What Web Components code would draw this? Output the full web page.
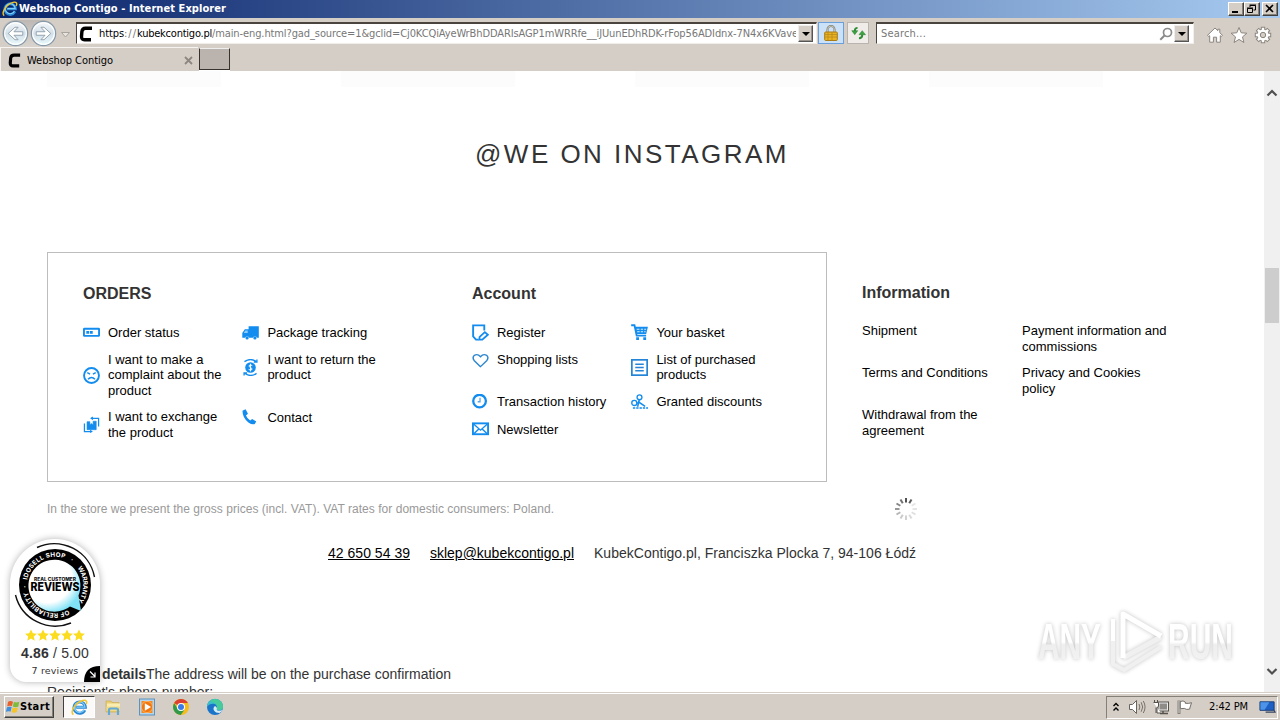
<!DOCTYPE html>
<html lang="en">
<head>
<meta charset="utf-8">
<title>Webshop Contigo</title>
<style>
html,body{margin:0;height:100%;overflow:hidden}
body{width:1280px;height:720px;display:flex;flex-direction:column;font:11px/14px "DejaVu Sans Condensed","DejaVu Sans",sans-serif;color:#000;background:#d5cec6;position:relative}
</style>
</head>
<body>
<title-bar></title-bar>
<nav-bar></nav-bar>
<tab-strip></tab-strip>
<page-view></page-view>
<task-bar></task-bar>
<script>
const B = '#128cee';
const ICONS = {
  ie: `<svg viewBox="0 0 18 18"><path d="M14.6 11.8A6 6 0 1 1 15.2 8.800H5.500" fill="none" stroke="#2a86d4" stroke-width="3.200"/><path d="M14 11.600A5.600 5.600 0 1 1 14.800 8.500H6" fill="none" stroke="#7fd0fa" stroke-width="1.300"/><path d="M2.500 16.500C-1.500 14 4.500 3.500 12.500 1.500C16.500.6 17.300 3 16 5.500" fill="none" stroke="#f2c52c" stroke-width="1.600"/></svg>`,
  c: `<svg viewBox="0 0 14 16"><path d="M13 2.300H6.500Q3.300 2.300 2.900 5.500L2.500 10.500Q2.300 13.700 5.500 13.700H12" fill="none" stroke="#000" stroke-width="3.400"/></svg>`,
  back: `<svg viewBox="0 0 26 26"><defs><linearGradient id="g" x2="0" y2="1"><stop offset="0" stop-color="#f6f9fb"/><stop offset=".5" stop-color="#d3dfe8"/><stop offset="1" stop-color="#e9fafd"/></linearGradient></defs><circle cx="13" cy="13" r="11.700" fill="url(#g)" stroke="#8799a8" stroke-width="1.200"/><circle cx="13" cy="13" r="10.400" fill="none" stroke="#fff"/><path d="M6 13l6.500-6h3l-4 4.300H20v3.400h-8.500l4 4.300h-3z" fill="#fff" stroke="#8d9fae" stroke-width=".9"/></svg>`,
  lock: `<svg viewBox="0 0 14 16"><path d="M3.500 8V4.500a3.500 3.500 0 0 1 7 0V8" fill="none" stroke="#7c7a70" stroke-width="2"/><path d="M3.500 7V4.500a3.500 3.500 0 0 1 7 0V7" fill="none" stroke="#e4e0c8" stroke-width=".7"/><rect x=".7" y="7" width="12.600" height="8.500" rx="1" fill="#e9b322" stroke="#a87b13"/><path d="M1 9.500h12M1 12h12M4 7v8.500M8 7v8.500" stroke="#b98a1c" stroke-width=".8"/></svg>`,
  refresh: `<svg viewBox="0 0 16 14"><path d="M7 1.500Q4 1.500 4 5" fill="none" stroke="#2f8f35" stroke-width="2"/><path d="M.8 4.500h6.400L4 8.800z" fill="#3aa43f" stroke="#23762a" stroke-width=".5"/><path d="M8.500 12.500q3.500 0 3.500-4" fill="none" stroke="#2f8f35" stroke-width="2.200"/><path d="M8.500 8.800h7L12 4.500z" fill="#3aa43f" stroke="#23762a" stroke-width=".5"/></svg>`,
  search: `<svg viewBox="0 0 14 14"><circle cx="8.500" cy="5.500" r="4" fill="#fff" stroke="#8b8b8b" stroke-width="1.700"/><path d="M5.500 8.500L1.300 12.700" stroke="#8b8b8b" stroke-width="2"/></svg>`,
  home: `<svg viewBox="0 0 18 18"><path d="M1.500 9.300L9 2l2.800 2.700V3.200h2V6.700l2.700 2.600-1.300 1.200-.9-.8v6.500h-3.700v-5H7.400v5H3.700V9.700l-.9.8z" fill="#fff" stroke="#8b857e" stroke-width="1"/></svg>`,
  star: `<svg viewBox="0 0 18 18"><path d="M9 1.500l2.200 5.300 5.700.4-4.400 3.700 1.400 5.600L9 13.400l-4.900 3.100 1.400-5.600L1.100 7.200l5.700-.4z" fill="#fff" stroke="#8b857e"/></svg>`,
  gear: `<svg viewBox="0 0 18 18"><g stroke="#8b857e" stroke-width="4.400"><path d="M9 .8v16.400M.8 9h16.400M3.200 3.200l11.600 11.600M14.800 3.200L3.200 14.800"/></g><circle cx="9" cy="9" r="6.300" fill="#8b857e"/><g stroke="#fff" stroke-width="2.400"><path d="M9 1.800v14.400M1.800 9h14.400M3.900 3.900l10.200 10.200M14.100 3.900L3.900 14.100"/></g><circle cx="9" cy="9" r="5.500" fill="#fff"/><circle cx="9" cy="9" r="2.700" fill="#d5cec6" stroke="#8b857e"/></svg>`,
  status: `<svg viewBox="0 0 18 18"><rect x="1" y="5" width="16" height="7.600" rx=".5" fill="none" stroke="${B}" stroke-width="2"/><path d="M3.500 7.300h3v3h-3zM7.300 7.300h3v3h-3z" fill="${B}"/></svg>`,
  truck: `<svg viewBox="0 0 18 18"><path d="M7 2.500h10.800v12h-1.900a2.300 2.300 0 0 0-4.400 0H7.600a2.300 2.300 0 0 0-4.400 0H.3V9.500L3 5.500h4z" fill="${B}"/><path d="M3.500 6.800H6v2.700H1.900z" fill="#8ccbfa"/><circle cx="5.400" cy="14.800" r="1.700" fill="${B}"/><circle cx="13.700" cy="14.800" r="1.700" fill="${B}"/></svg>`,
  sad: `<svg viewBox="0 0 18 18"><circle cx="9" cy="9" r="7.900" fill="none" stroke="${B}" stroke-width="2"/><path d="M4.500 6l3 1.500M13.500 6l-3 1.500M5.300 13q3.700-3.800 7.400 0" fill="none" stroke="${B}" stroke-width="1.600"/></svg>`,
  ret: `<svg viewBox="0 0 18 18"><circle cx="9" cy="9" r="5.600" fill="${B}"/><path d="M10.900 7Q9 5.700 7.600 6.800 7 8.300 9 9T10.500 11.200Q9 12.500 7 11M9 5v8.200" stroke="#fff" stroke-width="1" fill="none"/><path d="M2.600 2.800Q9-1.500 14.800 2.600M15.800.5v2.800H12.500M15.400 15.200Q9 19.500 3.200 15.400M2.200 17.500v-2.800H5.500" fill="none" stroke="${B}" stroke-width="1.400"/></svg>`,
  exch: `<svg viewBox="0 0 18 18"><path d="M4.300 6h3v3.200L9 8l1.700 1.200V5.500H14v9H4.300z" fill="${B}" stroke="${B}" stroke-width=".6"/><path d="M8.500 2.500h8V11M1.500 8v8.500H9" fill="none" stroke="${B}" stroke-width="1.300"/><path d="M10.500.5v4L7.500 2.500zM7.500 14.500v3.500l3-1.700z" fill="${B}"/></svg>`,
  phone: `<svg viewBox="0 0 18 18"><path d="M.5 1.800L3.800.2l2.500 4.900-2.100 1.800q1.300 3.500 4.500 5.200l2-1.600 4.400 2.700-1.600 2.700q-2.600 1.200-6.700-1.600Q.5 9.100.5 1.800z" fill="${B}"/></svg>`,
  register: `<svg viewBox="0 0 18 18"><path d="M13 7V1.500H1.200v11.700l3 3.300H7" fill="none" stroke="${B}" stroke-width="2"/><path d="M7.700 16.600l.4-3 5.500-5 3.200 2.800-5.900 5.200z" fill="#fff" stroke="${B}" stroke-width="1.900"/></svg>`,
  heart: `<svg viewBox="0 0 18 18"><path d="M9 15.500L2.500 9.300Q-.2 6 2.500 3.500 6 1.500 9 5q3-3.500 6.500-1.500 2.700 2.500 0 5.800z" fill="none" stroke="#2c86cf" stroke-width="1.500"/></svg>`,
  clock: `<svg viewBox="0 0 18 18"><circle cx="8" cy="7.500" r="6.700" fill="#fff" stroke="${B}" stroke-width="2.400"/><path d="M8.500 4v4.200H6" fill="none" stroke="#5aa7e6" stroke-width="1.400"/></svg>`,
  mail: `<svg viewBox="0 0 18 18"><rect x="1" y="2.500" width="16" height="11.500" fill="none" stroke="${B}" stroke-width="2"/><path d="M2 3.500l7 6.200 7-6.200M2 13.500L7.200 8.500M16 13.500L10.800 8.500" fill="none" stroke="${B}" stroke-width="1.500"/></svg>`,
  cart: `<svg viewBox="0 0 18 18"><path d="M.2 1.300H3.700l2.300 11H16" fill="none" stroke="${B}" stroke-width="1.900"/><path d="M4 3h13.900l-1.800 7.500H6z" fill="${B}"/><path d="M6 5.500h3M10.300 5.500h2.500M14 5.500h2M6.500 8.200h2.700M10.300 8.200h2.500M14 8.200h1.500" stroke="#d8efff" stroke-width="1.200"/><path d="M5.500 14h3v3h-3zM13 14h3v3h-3z" fill="${B}"/></svg>`,
  list: `<svg viewBox="0 0 18 18"><rect x=".9" y=".9" width="16.200" height="16.200" fill="none" stroke="#2485d8" stroke-width="1.800"/><path d="M4.500 5.500h9M4.500 9h9M4.500 12.500h9" stroke="#2485d8" stroke-width="1.600"/></svg>`,
  scis: `<svg viewBox="0 0 18 18"><circle cx="9" cy="3.500" r="2.600" fill="none" stroke="${B}" stroke-width="1.400"/><circle cx="3.500" cy="9.500" r="2.700" fill="none" stroke="${B}" stroke-width="1.400"/><path d="M8.700 6.200L7 13.500M6 9.500l3-.5 6 4" fill="none" stroke="${B}" stroke-width="1.600"/><path d="M2 14.800h16" stroke="${B}" stroke-width="1.400" stroke-dasharray="2.500 1"/></svg>`,
  win: `<svg viewBox="0 0 18 18"><path d="M3.500 3Q6 1.500 9 3L7.800 8Q5 7 2.500 8.200z" fill="#e8602c"/><path d="M10 3.500q3 1.200 6-.3L15 8.500q-3 1.300-6.200 0z" fill="#7dbb3c"/><path d="M2.200 9.300q2.500-1.200 5.300-.2l-1.200 5q-2.500-1-5.300.2z" fill="#3f8fdc"/><path d="M8.500 9.500q3 1.200 6 0l-1.300 5.200q-3 1.300-6 0z" fill="#f5c32c"/></svg>`,
  folder: `<svg viewBox="0 0 18 18"><path d="M2 3h5l1 1.500h7V14H2z" fill="#e9cd72" stroke="#c8a84a" stroke-width=".6"/><path d="M3 5.500h13V9H3z" fill="#f8ecb0"/><path d="M2.500 8.500h13.500v4.500H2.500z" fill="#f0da8a"/><path d="M5 17v-5q0-1.500 1.500-1.500h6q1.500 0 1.500 1.500v5" fill="none" stroke="#62a9d6" stroke-width="2.200"/></svg>`,
  media: `<svg viewBox="0 0 18 18"><rect x="1.500" y="1" width="15" height="16" fill="#b4d5ee" stroke="#5b93be"/><rect x="3.500" y="3" width="11" height="12" fill="#f58a1c"/><circle cx="9" cy="9" r="5.600" fill="#f2770f" stroke="#ffc98c" stroke-width=".6"/><path d="M6.800 5.200L13 9l-6.200 3.800z" fill="#fff"/></svg>`,
  chrome: `<svg viewBox="0 0 18 18"><circle cx="9" cy="9" r="8" fill="#f4bd1b"/><path d="M9 9L2.100 5A8 8 0 0 1 15.900 5H9z" fill="#dc4030"/><path d="M9 9l3 3.500L8.700 17A8 8 0 0 1 2.100 5L6 11.500z" fill="#31994b"/><circle cx="9" cy="9" r="4" fill="#fff"/><circle cx="9" cy="9" r="3" fill="#3a7be8"/></svg>`,
  edge: `<svg viewBox="0 0 18 18"><circle cx="9" cy="9" r="8" fill="#1a74ca"/><path d="M1 9A8 8 0 0 1 17 8.500q.2 4-4.500 4Q9.800 12.300 11 10.500 11.300 6 7 5.800 3 5.800 1 9z" fill="#3cc0c8"/><path d="M9 1a8 8 0 0 1 8 7.500q0 3.500-4.500 3.500-2-.2-1.500-1.500Q12 4.500 4 3 6 1 9 1z" fill="#4bcf8a" opacity=".75"/><path d="M11 10.500q-1 1.900 1.500 2.200 2.500.2 4-1-1 2.300-3 3.300-4 0-5.500-2.500T9 8q1.800.5 2 2.500z" fill="#d7ecf5"/></svg>`,
  speaker: `<svg viewBox="0 0 18 16"><path d="M1.500 5.500h3l4-4v13l-4-4h-3z" fill="#fff" stroke="#69635d"/><path d="M11 5q1.700 3 0 6M13.200 3.300q3 4.700 0 9.400M15.300 2q3.500 6 0 12" fill="none" stroke="#78726c" stroke-width="1"/></svg>`,
  net: `<svg viewBox="0 0 18 16"><rect x="6" y="3" width="10.500" height="9" fill="#eee" stroke="#57524c"/><rect x="7.500" y="4.500" width="7.500" height="6" fill="#8f8b87"/><path d="M8 14.500h8M11 12v2" stroke="#57524c" stroke-width="1.500"/><path d="M1.500 3.500h5v4l-1.500 1v5.500H9M2.500 1v3M5.500 1v3M4 8.500v5.500" stroke="#57524c" fill="#fff"/></svg>`,
  flag: `<svg viewBox="0 0 18 16"><path d="M3 1.500v13.500" stroke="#57524c" stroke-width="2.600"/><path d="M3 1.500v13" stroke="#fff" stroke-width="1"/><path d="M4.300 2.500q3-1.300 5 .5v1.300q3.500.5 6.200-.6l-2 6.500q-3 .8-5.200-.8l-4 .3z" fill="#fff" stroke="#69635d" stroke-width=".9"/></svg>`,
  desk: `<svg viewBox="0 0 18 16"><path d="M1 2.500h15v9H1z" fill="#1d5fc2" stroke="#163c7a"/><path d="M1.500 3H11L6 11H1.500z" fill="#4d93e8"/><path d="M7 13.500h10l-1-2" fill="none" stroke="#36465e" stroke-width="1.300"/></svg>`
};
const define = (name, css, html, hook) => customElements.define(name, class extends HTMLElement {
  constructor(){ super(); this.attachShadow({mode:'open'}); }
  connectedCallback(){
    this.shadowRoot.innerHTML = `<style>*,:host{box-sizing:border-box}${css}</style>${typeof html === 'function' ? html(this) : html}`;
    if (hook) hook(this);
  }
});

/* Square icon; attribute s is its width, h its height */
define('ui-icon', ':host{display:block;flex:none}svg{display:block;width:100%;height:100%}',
  el => ICONS[el.getAttribute('n')],
  el => { const s = el.getAttribute('s') || 18; el.style.width = s+'px'; el.style.height = (el.getAttribute('h')||s)+'px'; });

define('title-bar', `:host{display:flex;align-items:center;height:18px;flex:none;padding:0 2px 0 2px;background:linear-gradient(90deg,#0a246a,#a6caf0);color:#fff;font-weight:bold;gap:1px}
  .b{display:flex;margin-left:auto;margin-top:0}
  i{display:block;width:16px;height:14px;background:#d5cec6;border:1px solid;border-color:#fff #404040 #404040 #fff;box-shadow:inset -1px -1px #848078}
  i:last-child{margin-left:2px}svg{display:block}`,
  `<ui-icon n="ie" s="16"></ui-icon><ui-fit w="207">Webshop Contigo - Internet Explorer</ui-fit>
  <div class="b"><i><svg width="14" height="12"><path d="M3 9h6" stroke="#000" stroke-width="2"/></svg></i><i><svg width="14" height="12"><path d="M5 4V2.500h5.500V7H8.500M4.500 2h6.500" fill="none" stroke="#000"/><path d="M2.500 5.500h5v4h-5zM2 5h6" fill="none" stroke="#000"/></svg></i><i><svg width="14" height="12"><path d="M3 2l7 7M10 2l-7 7" stroke="#000" stroke-width="1.600"/></svg></i></div>`);

define('nav-bar', `:host{display:flex;height:29px;flex:none;align-items:flex-start;padding:2px 6px 0 2px;background:#d5cec6}
  .nav{display:flex;gap:1px;width:54px;height:27px;background:linear-gradient(#bdb8b4,#d9d4ce);border-radius:13px}
  .nav ui-icon+ui-icon{transform:scaleX(-1)}
  .tri{margin:12px 6px 0 5px;flex:none}
  .f{display:flex;align-items:center;height:22px;margin-top:2px;background:#fff;border:2px solid;border-color:#4a443f #f3f0ec #f0ece8 #4a443f;border-right-width:1px;border-bottom-width:1px;border-left-width:1px;color:#777}
  .url{width:741px;padding-left:2px}.url .t{display:flex;width:697px;overflow:hidden;margin-left:6px;white-space:nowrap}
  .url b{font-weight:normal;color:#000}
  .dd{display:block;width:15px;height:17px;background:#d5cec6;border:1px solid;border-color:#eee #555 #555 #eee;box-shadow:inset -1px -1px #99948e;flex:none}
  .dd svg{display:block}
  .lk{margin:2px 0 0 1px;width:26px;height:22px;border:1px solid #6a9fdc;background:#cbe1f8;display:grid;place-items:center}
  .rf{margin:2px 0 0 3px;width:22px;height:22px;border:1px solid #b9b4ae;background:#efece9;display:grid;place-items:center}
  .s{width:318px;margin-left:7px;padding-left:4px}.s .m{margin-left:auto}
  .r{display:flex;gap:6px;margin:6px 0 0 12px}`,
  `<div class="nav"><ui-icon n="back" s="27"></ui-icon><ui-icon n="back" s="27"></ui-icon></div>
  <svg class="tri" width="9" height="6"><path d="M.5.500h8L4.500 5z" fill="#e8e4df" stroke="#aaa49d"/></svg>
  <div class="f url"><ui-icon n="c" s="14" h="16"></ui-icon><div class="t"><b><ui-fit w="25">https</ui-fit></b><ui-fit w="13">://</ui-fit><b><ui-fit w="75">kubekcontigo.pl</ui-fit></b><ui-fit w="586">/main-eng.html?gad_source=1&amp;gclid=Cj0KCQiAyeWrBhDDARIsAGP1mWRRfe__iJUunEDhRDK-rFop56ADIdnx-7N4x6KVave</ui-fit></div><span style="width:2px"></span><span class="dd"><svg width="13" height="15"><path d="M3 6h8L7 10z"/></svg></span></div>
  <div class="lk"><ui-icon n="lock" s="14" h="16"></ui-icon></div><div class="rf"><ui-icon n="refresh" s="15" h="14"></ui-icon></div>
  <div class="f s"><ui-fit w="45">Search...</ui-fit><ui-icon class="m" n="search" s="14"></ui-icon><span class="dd" style="margin:0 4px 0 1px"><svg width="13" height="15"><path d="M3 6h8L7 10z"/></svg></span></div>
  <div class="r"><ui-icon n="home"></ui-icon><ui-icon n="star"></ui-icon><ui-icon n="gear"></ui-icon></div>`);

define('tab-strip', `:host{display:flex;height:24px;flex:none;background:#d5cec6}
  .t{display:flex;align-items:center;width:198px;border-top:1px solid #f6f3f0;border-left:1px solid #f6f3f0;padding:2px 5px 0 6px;gap:5px}
  .t svg{margin-left:auto}
  .n{width:31px;height:22px;margin:1px 0 0 1px;background:#bbb4ae;border:1px solid #38322f;border-left-width:1px;border-top-color:#eee;box-shadow:0 1px #fff}`,
  `<div class="t"><ui-icon n="c" s="15" h="15"></ui-icon><ui-fit w="86">Webshop Contigo</ui-fit><svg width="9" height="9"><path d="M1 1l7 7M8 1L1 8" stroke="#8d8680" stroke-width="1.800"/></svg></div><div class="n"></div>`);

define('link-item', `:host{display:flex;align-items:center;gap:8px}span{display:block}`,
  el => (el.hasAttribute('icon') ? `<ui-icon n="${el.getAttribute('icon')}" s="17"></ui-icon>` : '') + `<span><slot></slot></span>`);

define('link-group', `:host{display:block}h2{margin:0;font-size:16px;line-height:20px;color:#333}
  div{display:grid;grid-template-columns:var(--c,159.4px) 170px;row-gap:var(--g,10.7px);align-items:start;margin-top:20px;font-size:13px;line-height:15.6px}`,
  el => `<h2>${el.getAttribute('heading')}</h2><div><slot></slot></div>`);

define('scroll-bar', `:host{display:flex;flex-direction:column;width:16px;background:#f0f0f0;padding:18px 1px 15px;align-items:center}
  .th{width:14px;height:55px;background:#cdcdcd;margin-top:171px}.d{margin-top:auto}svg{display:block}`,
  `<svg width="12" height="8"><path d="M1.500 6.500L6 2l4.500 4.500" fill="none" stroke="#505050" stroke-width="2.200"/></svg><div class="th"></div><svg class="d" width="12" height="12"><path d="M1.500 4L6 8.500 10.500 4" fill="none" stroke="#505050" stroke-width="2.200"/></svg>`);

define('page-view', `:host{display:flex;height:621px;flex:none;background:#fff;overflow:hidden;font-family:"Liberation Sans",Arial,sans-serif}
  main{width:1264px;padding-left:47px;position:relative}
  .ph{display:grid;grid-template-columns:repeat(4,174px);column-gap:120px;height:16px}.ph i{background:#fcfcfc}
  h1{margin:49px 0 0;padding-left:428px;font-weight:normal;font-size:26px;line-height:36px;color:#333;display:flex}
  .cols{display:flex;margin-top:80px;gap:35px}
  .box{width:780px;height:230px;border:1px solid #bdbdbd;padding:31px 0 0 35px;display:flex;gap:59.600px}
  .info{padding-top:31px;--c:160px;--g:11px}
  .vat{display:flex;justify-content:space-between;width:871px;color:#999;font-size:12px;line-height:16px;margin-top:15px;height:24px;align-items:center}
  .ct{display:flex;gap:20px;margin:23px 0 0 281px;font-size:14px;line-height:18px;color:#333}
  .u{color:#000;text-decoration:underline;text-underline-offset:1px}
  .ad{margin-top:103px;font-size:14px;line-height:18px;color:#333}.ad p{margin:0}.ad p:first-child{padding-left:55px}
  review-badge{position:absolute;left:10px;top:468px}any-mark{position:absolute;left:1029px;top:534px}`,
  () => `<main><div class="ph"><i></i><i></i><i></i><i></i></div>
  <h1><ui-fit w="314">@WE ON INSTAGRAM</ui-fit></h1>
  <div class="cols"><div class="box">
  <link-group heading="ORDERS"><link-item icon="status">Order status</link-item><link-item icon="truck">Package tracking</link-item><link-item icon="sad">I want to make a<br>complaint about the<br>product</link-item><link-item icon="ret">I want to return the<br>product</link-item><link-item icon="exch">I want to exchange<br>the product</link-item><link-item icon="phone">Contact</link-item></link-group>
  <link-group heading="Account"><link-item icon="register">Register</link-item><link-item icon="cart">Your basket</link-item><link-item icon="heart">Shopping lists</link-item><link-item icon="list">List of purchased<br>products</link-item><link-item icon="clock">Transaction history</link-item><link-item icon="scis">Granted discounts</link-item><link-item icon="mail">Newsletter</link-item></link-group>
  </div><div class="info"><link-group heading="Information"><link-item>Shipment</link-item><link-item>Payment information and<br>commissions</link-item><link-item>Terms and Conditions</link-item><link-item>Privacy and Cookies<br>policy</link-item><link-item>Withdrawal from the<br>agreement</link-item></link-group></div></div>
  <div class="vat"><ui-fit w="507">In the store we present the gross prices (incl. VAT). VAT rates for domestic consumers: Poland.</ui-fit><svg width="24" height="24" viewBox="-12 -12 24 24">${[.85,.8,.12,.12,.15,.18,.22,.26,.36,.5,.6,.7].map((o,i)=>`<path d="M0-6.500V-11" transform="rotate(${i*30})" stroke="#333" stroke-width="2" opacity="${o}"/>`).join('')}</svg></div>
  <div class="ct"><ui-fit class="u" w="82">42 650 54 39</ui-fit><ui-fit class="u" w="144">sklep@kubekcontigo.pl</ui-fit><ui-fit w="322">KubekContigo.pl, Franciszka Plocka 7, 94-106 Łódź</ui-fit></div>
  <div class="ad"><p><b><ui-fit w="44">details</ui-fit></b><ui-fit w="305">The address will be on the purchase confirmation</ui-fit></p><p>Recipient's phone number:</p></div>
  <review-badge></review-badge><any-mark></any-mark></main><scroll-bar></scroll-bar>`);

define('review-badge', `:host{display:flex;flex-direction:column;align-items:center;width:90px;height:143px;background:#fff;border-radius:45px 45px 0 16px;box-shadow:0 0 7px rgba(0,0,0,.3);color:#333}
  svg{display:block}.st{margin-top:0}.sc{font-size:14px;line-height:18px;margin-top:2px}
  .n{font-family:"DejaVu Sans","DejaVu Sans Condensed",sans-serif;font-size:9.500px;line-height:14px;margin-top:2px}
  .k{position:absolute;right:0;bottom:0}text{font-family:Inter,Lato,sans-serif}`,
  `<svg width="90" height="90" viewBox="0 0 90 90"><defs><path id="r" d="M16.800 46a28.200 28.200 0 0 1 56.400 0a28.200 28.200 0 0 1-56.400 0"/><radialGradient id="c" cx=".36" cy=".36" r=".75"><stop offset=".62" stop-color="#fff"/><stop offset=".9" stop-color="#7fe2f6"/></radialGradient></defs>
  <circle cx="45" cy="46" r="36" fill="#000"/><path d="M71 72l-11-4.500a26 26 0 1 1 8.500-11z" fill="url(#c)"/>
  <path d="M27 8.500A41 41 0 0 1 84.500 38M5.500 56A41 41 0 0 0 61 84" fill="none" stroke="#111" stroke-width="1.400"/>
  <g fill="#fff" font-size="6.300" font-weight="700"><text><textPath href="#r" startOffset="5" textLength="49">IDOSELL SHOP</textPath></text><text><textPath href="#r" startOffset="60">·</textPath></text><text><textPath href="#r" startOffset="70" textLength="36">WARRANTY</textPath></text><text><textPath href="#r" startOffset="119" textLength="51">OF RELIABILITY</textPath></text><text><textPath href="#r" startOffset="174">·</textPath></text></g>
  <text x="24" y="41.500" font-size="4.400" font-weight="800" textLength="42" lengthAdjust="spacingAndGlyphs" fill="#111">REAL CUSTOMER</text><text x="20.500" y="52.300" font-size="11.500" font-weight="800" textLength="49" lengthAdjust="spacingAndGlyphs" fill="#000">REVIEWS</text></svg>
  <svg class="st" width="60" height="13">${[0,1,2,3,4].map(i=>`<path transform="translate(${i*12})" d="M6 .5l1.800 3.800 4.100.4-3.100 2.800.9 4.200L6 9.600 2.300 11.700l.9-4.200L.1 4.700l4.100-.4z" fill="#fbdc1e"/>`).join('')}</svg>
  <div class="sc"><b><ui-fit w="28">4.86</ui-fit></b><ui-fit w="40"> / 5.00</ui-fit></div><ui-fit class="n" w="47">7 reviews</ui-fit>
  <svg class="k" width="16" height="16"><path d="M16 0v16H0Q0 0 16 0z" fill="#000"/><path d="M6 5.500l5 5M11 6.500v4.500H6.500" fill="none" stroke="#fff" stroke-width="1.200"/></svg>`);

define('any-mark', ':host{display:block}svg{display:block;filter:drop-shadow(0 0 2px rgba(0,0,0,.24))}text{font-family:"Liberation Sans Narrow","Liberation Sans",sans-serif;font-weight:bold}',
  `<svg width="220" height="78" viewBox="-5 0 220 78"><defs><linearGradient id="w" x2="0" y2="1"><stop offset=".5" stop-color="#fff"/><stop offset=".55" stop-color="#eee"/><stop offset="1" stop-color="#f5f5f5"/></linearGradient></defs>
  <g font-size="50" fill="url(#w)"><text x="4" y="54" textLength="63" lengthAdjust="spacingAndGlyphs">ANY</text><text x="134" y="54" textLength="65" lengthAdjust="spacingAndGlyphs">RUN</text></g>
  <g fill="none" stroke-linejoin="round"><path d="M79 14v45l11 6 37-23" stroke="#f0f0f0" stroke-width="4"/><path d="M89 53l38-21" stroke="#f0f0f0" stroke-width="5"/><path d="M89 53V9l38 22" stroke="#fff" stroke-width="5"/><path d="M79 14V36" stroke="#fff" stroke-width="4"/></g></svg>`);

define('task-bar', `:host{display:flex;height:28px;flex:none;background:#d5cec6;border-top:1px solid #d5cec6;box-shadow:inset 0 1px #fff;padding:3px 2px 2px 4px;align-items:center}
  .st{display:flex;align-items:center;width:50px;height:22px;border:1px solid;border-color:#fff #404040 #404040 #fff;box-shadow:inset -1px -1px #848078;font-weight:bold}
  .ie{width:32px;height:22px;margin-left:9px;background:#fbfaf9;border:1px solid;border-color:#404040 #fff #fff #404040;display:grid;place-items:center}
  .q{display:flex;gap:16px;margin-left:9px}
  .tr{display:flex;align-items:center;margin-left:auto;width:172px;height:23px;border:1px solid;border-color:#848078 #fff #fff #848078;padding-left:6px}`,
  `<div class="st"><ui-icon n="win" s="16"></ui-icon><ui-fit w="30" style="margin-left:-1px">Start</ui-fit></div><div class="ie"><ui-icon n="ie" s="17"></ui-icon></div>
  <div class="q"><ui-icon n="folder"></ui-icon><ui-icon n="media"></ui-icon><ui-icon n="chrome"></ui-icon><ui-icon n="edge"></ui-icon></div>
  <div class="tr"><svg width="6" height="10"><path d="M.5 4L3 1.500 5.500 4M.5 8.500L3 6l2.500 2.500" fill="none" stroke="#000" stroke-width="1.400"/></svg><ui-icon n="speaker" s="18" h="16" style="margin-left:9px"></ui-icon><ui-icon n="net" s="18" h="16" style="margin-left:6px"></ui-icon><ui-icon n="flag" s="18" h="16" style="margin-left:6px"></ui-icon><ui-fit w="39" style="margin-left:15px">2:42 PM</ui-fit><ui-icon n="desk" s="17" h="16" style="margin-left:11px"></ui-icon></div>`);

/* Text run whose letter-spacing is set so that it fills the width w */
define('ui-fit', ':host{display:inline-block;white-space:pre;flex:none}', '<slot></slot>', el => {
  const w = +el.getAttribute('w');
  const own = el.getBoundingClientRect().width;
  el.style.letterSpacing = (w - own) / el.textContent.length + 'px';
  el.style.width = w + 'px';
});
</script>
</body>
</html>
